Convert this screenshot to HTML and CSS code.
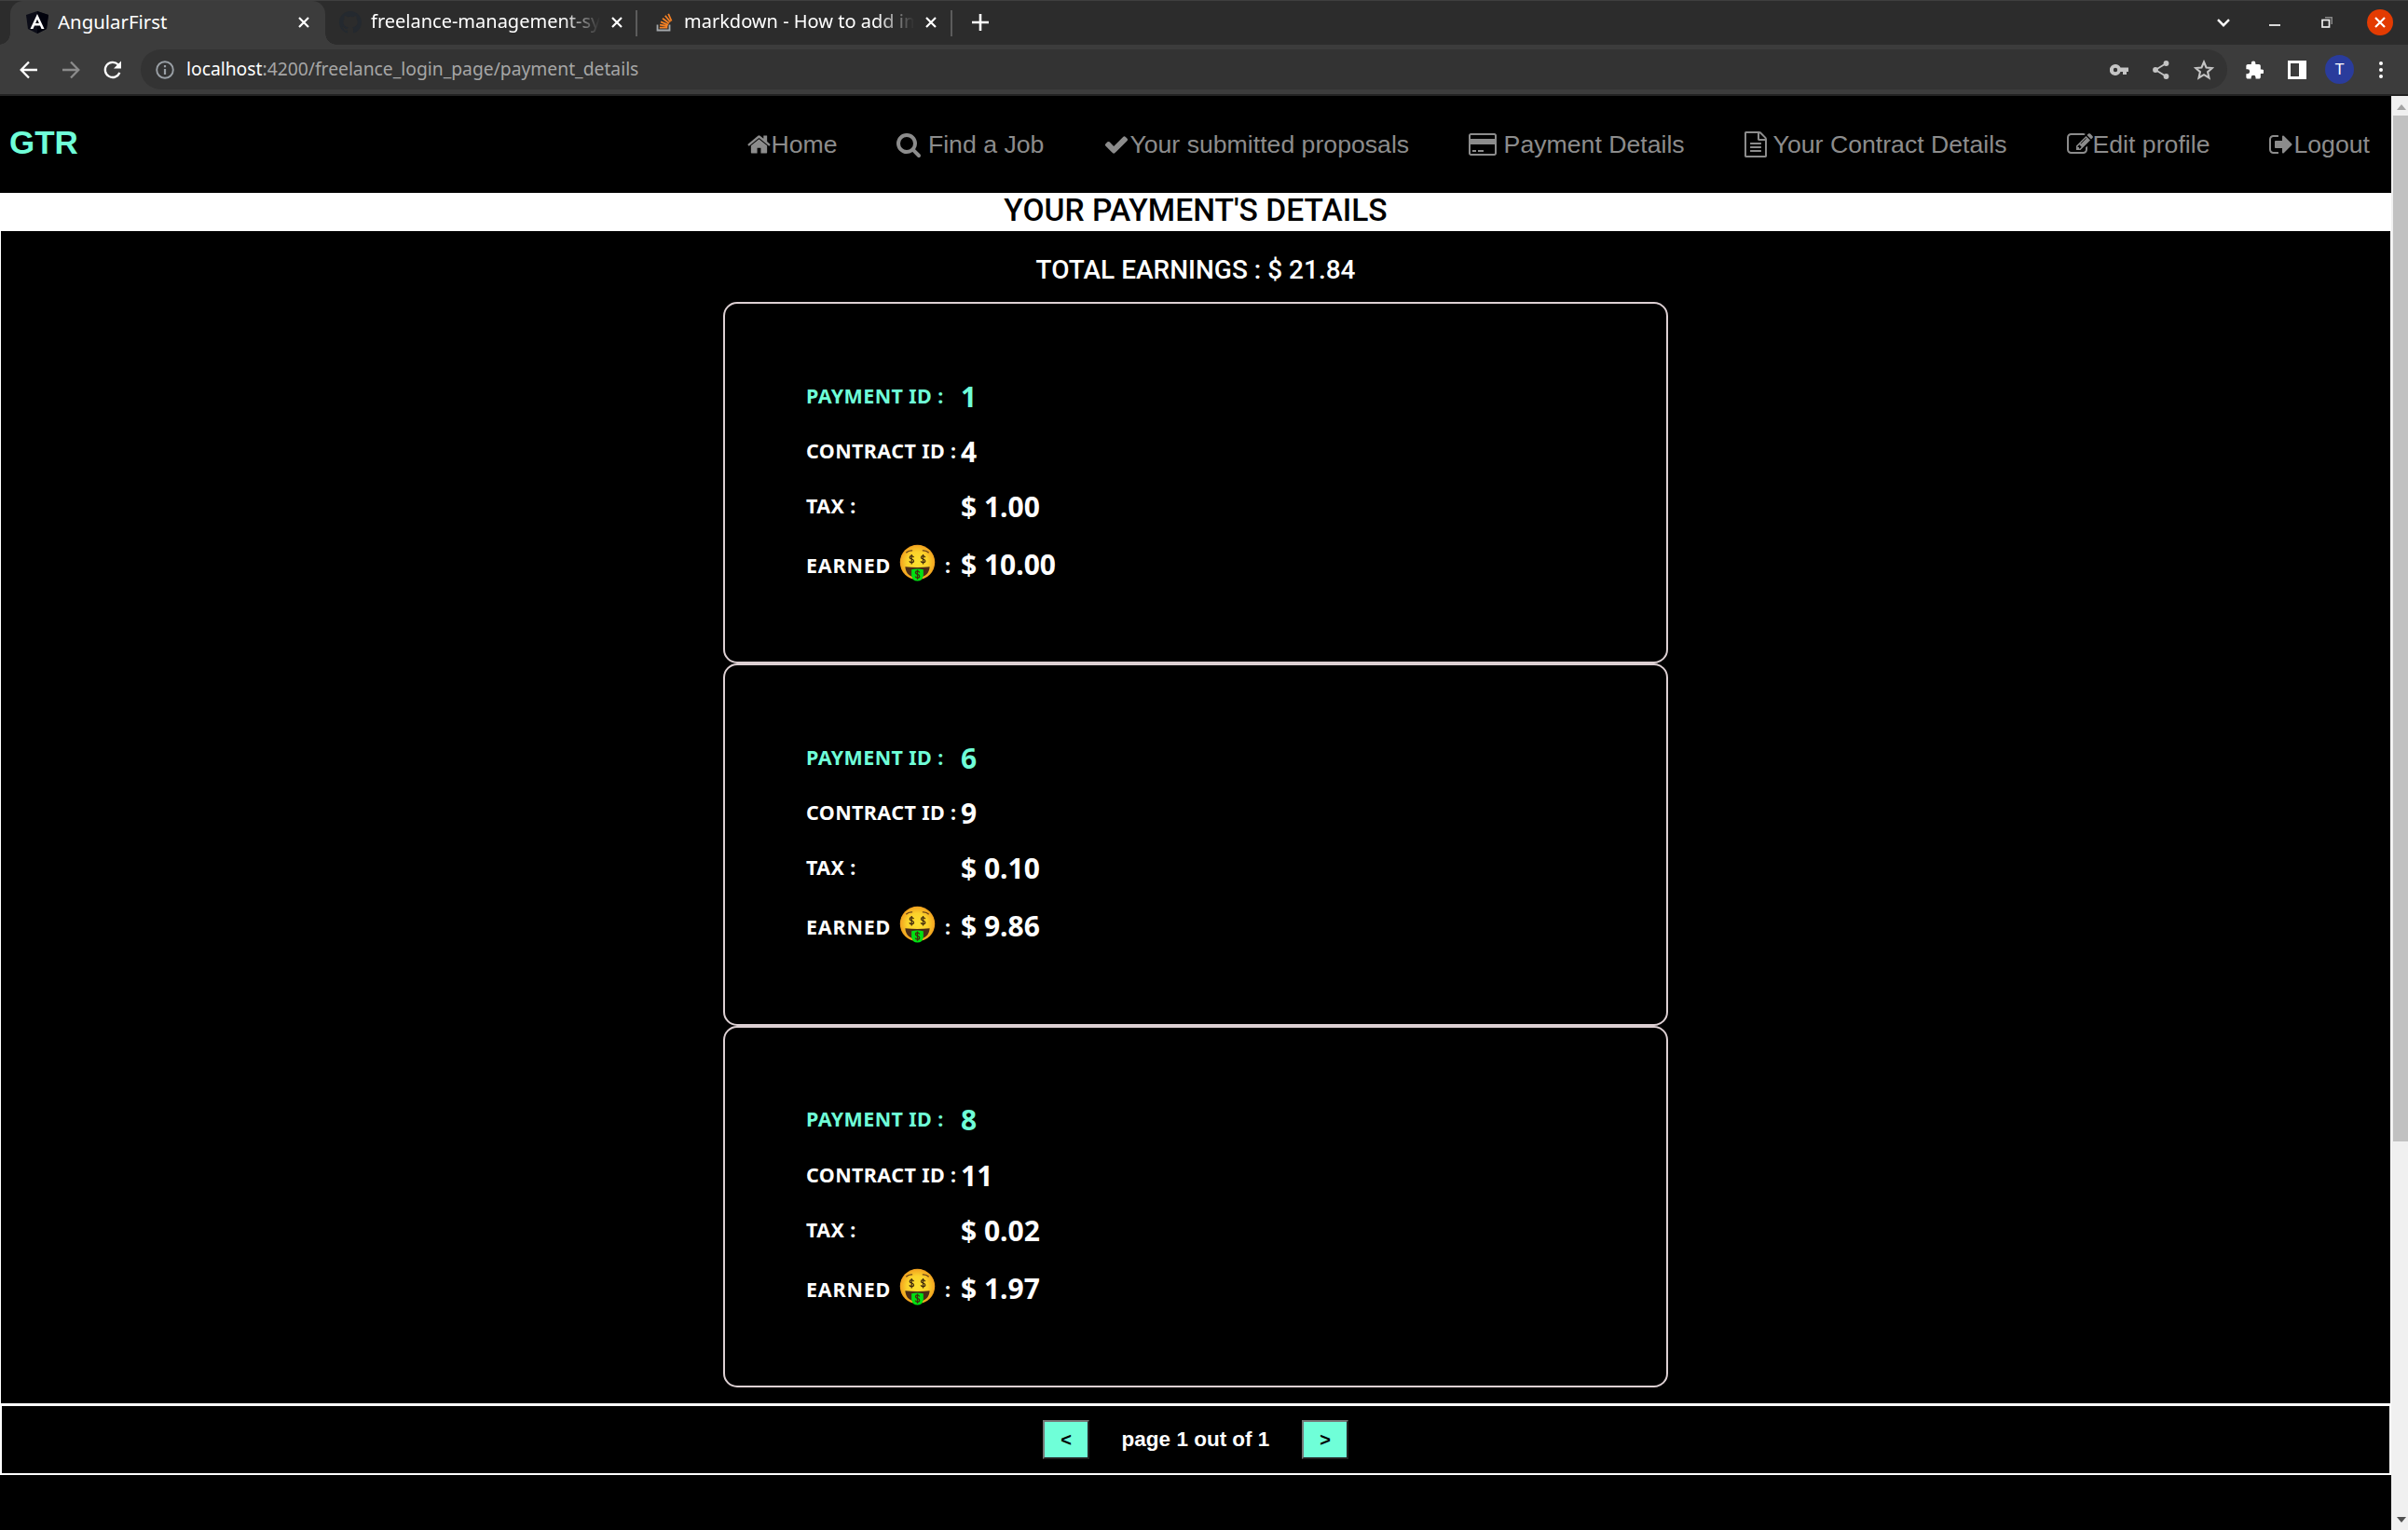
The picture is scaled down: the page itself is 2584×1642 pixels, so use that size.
FILE: index.html
```html
<!DOCTYPE html>
<html lang="en">
<head>
<meta charset="utf-8">
<title>AngularFirst</title>
<link rel="stylesheet" href="styles.css">
</head>
<body>
<svg class="defs" width="0" height="0">
  <defs>
    <radialGradient id="face" cx=".5" cy=".5" r=".5"><stop offset="0" stop-color="#fde030"/><stop offset=".6" stop-color="#fbd22b"/><stop offset="1" stop-color="#f2a11f"/></radialGradient>
    <symbol id="close" viewBox="0 0 12 12"><path d="M1 1L11 11M11 1L1 11" stroke="#fff" stroke-width="2.2"/></symbol>
    <symbol id="money" viewBox="0 0 40 40">
      <circle cx="20" cy="19.5" r="19.2" fill="url(#face)"/>
      <path d="M7.500 9Q10.500 6 14.500 6.600M25.500 6.600Q29.500 6 32.500 9" fill="none" stroke="#6b4518" stroke-width="1.400"/>
      <path d="M6.500 24.300Q20 26 33.500 24.300Q32.500 36 20 36Q7.500 36 6.500 24.300Z" fill="#4a2b16"/>
      <path d="M13.500 27.500Q20 26 26.500 27.500V34Q25.500 40 20 40Q14.500 40 13.500 34Z" fill="#00e013"/>
      <g fill="none" stroke="#422b0d" stroke-width="1.300"><path id="dollar" d="M16 14Q15 12.400 13.500 12.400Q11.500 12.400 11.500 14Q11.500 15.400 13.600 15.900Q15.900 16.400 15.900 18Q15.900 19.800 13.600 19.800Q11.800 19.800 11.200 18.200M13.600 10.800V21.500"/><use href="#dollar" x="12.600"/><use href="#dollar" x="6.400" y="16.800"/></g>
    </symbol>
  </defs>
</svg>

<header class="browser">
  <div class="tabs">
    <div class="tab tab-active">
      <svg class="favicon angular" viewBox="0 0 24 24"><path d="M12 0L24 4L22 19L12 24L2 19L0 4Z" fill="#0c0d18"/><path d="M12 0L24 4L22 19L12 24Z" fill="#01020c"/><path d="M4.500 19L12 3L19.500 19H16.500L15 15.500H9L7.500 19ZM10.100 13H13.900L12 8.800Z" fill="#fff" fill-rule="evenodd"/></svg>
      <span class="tab-title t1">AngularFirst</span>
      <svg class="x"><use href="#close"/></svg>
    </div>
    <div class="tab tab-second">
      <svg class="favicon" viewBox="0 0 16 16"><path fill="#24292f" d="M8 0C3.580 0 0 3.580 0 8c0 3.540 2.290 6.530 5.470 7.590.4.070.55-.17.55-.38v-1.490c-2.010.37-2.530-.49-2.690-.94-.09-.23-.48-.94-.82-1.130-.28-.15-.68-.52-.01-.53.63-.01 1.080.58 1.230.82.72 1.210 1.870.87 2.330.66.070-.52.28-.87.51-1.070-1.780-.2-3.640-.89-3.640-3.950 0-.87.31-1.590.82-2.150-.08-.2-.36-1.020.08-2.120 0 0 .67-.21 2.200.82a7.600 7.600 0 0 1 4 0c1.530-1.040 2.200-.82 2.200-.82.44 1.100.16 1.920.08 2.120.51.56.82 1.270.82 2.150 0 3.070-1.870 3.750-3.650 3.950.29.25.54.73.54 1.480v2.200c0 .21.150.46.55.38A8 8 0 0 0 16 8c0-4.420-3.580-8-8-8z"/></svg>
      <span class="tab-title t2">freelance-management-sys</span>
      <svg class="x"><use href="#close"/></svg>
    </div>
    <div class="tab tab-third">
      <svg class="favicon so" viewBox="0 0 18 20"><path d="M1.500 12.500V18.500H14.500V12.500" fill="none" stroke="#a4a8ab" stroke-width="1.800"/><path d="M3.800 15.600H12.300M4 12.600L12.400 14M5 9.300L13 12.600M7 5.800L14 11M9.800 2.700L15.300 9.500M13.200.8L16.600 8.500" stroke="#f48024" stroke-width="1.800"/></svg>
      <span class="tab-title t3">markdown - How to add ima</span>
      <svg class="x"><use href="#close"/></svg>
    </div>
    <svg class="plus" viewBox="0 0 18 18"><path d="M9 0V18M0 9H18" stroke="#fff" stroke-width="2.600"/></svg>
    <div class="window-controls">
      <svg class="chev" viewBox="0 0 14 9"><path d="M1 1.200L7 7.200L13 1.200" fill="none" stroke="#fff" stroke-width="2.400"/></svg>
      <svg class="min" viewBox="0 0 12 8"><path d="M0 7H12" stroke="#eee" stroke-width="1.800"/></svg>
      <svg class="restore" viewBox="0 0 12 12"><path d="M4 .8H11.200V8" fill="none" stroke="#888" stroke-width="1.500"/><rect x="1" y="3.500" width="7.500" height="7.500" fill="none" stroke="#eee" stroke-width="1.700"/></svg>
      <span class="quit"><svg class="x"><use href="#close"/></svg></span>
    </div>
  </div>
  <div class="toolbar">
    <svg class="arrow" viewBox="0 0 20 20"><path d="M19 10H2M10 1.500L1.700 10L10 18.500" fill="none" stroke="#fff" stroke-width="2.300"/></svg>
    <svg class="arrow fwd" viewBox="0 0 20 20"><path d="M1 10H18M10 1.500L18.300 10L10 18.500" fill="none" stroke="#8b8b8b" stroke-width="2.300"/></svg>
    <svg class="arrow" viewBox="0 0 20 20"><path d="M17.400 13A8.100 8.100 0 1 1 15.700 4.200L17 5.500" fill="none" stroke="#fff" stroke-width="2.300"/><path d="M19 0.500V8.500H11Z" fill="#fff"/></svg>
    <div class="address">
      <svg class="info" viewBox="0 0 20 20"><circle cx="10" cy="10" r="8.800" fill="none" stroke="#9aa0a6" stroke-width="1.900"/><path d="M10 9V15M10 5V7.200" stroke="#9aa0a6" stroke-width="2.200"/></svg>
      <span class="url"><b>localhost</b>:4200/freelance_login_page/payment_details</span>
      <svg class="key" viewBox="0 0 20 12"><path fill="#c4c4c4" fill-rule="evenodd" d="M6 0A6 6 0 1 0 11.500 8H14V11H18V8H20V3.500H11.500A6 6 0 0 0 6 0ZM6 3.800A2.200 2.200 0 1 1 6 8.200A2.200 2.200 0 0 1 6 3.800Z"/></svg>
      <svg class="share" viewBox="0 0 18 20"><path d="M14.500 3L3 10L14.500 17" fill="none" stroke="#c4c4c4" stroke-width="1.800"/><g fill="#c4c4c4"><circle cx="14.500" cy="3" r="2.900"/><circle cx="3" cy="10" r="2.900"/><circle cx="14.500" cy="17" r="2.900"/></g></svg>
      <svg class="star" viewBox="0 0 20 20"><path d="M10 2.300L12.300 7.700L18.100 8.200L13.700 12L15 17.700L10 14.700L5 17.700L6.300 12L1.900 8.200L7.700 7.700Z" fill="none" stroke="#c4c4c4" stroke-width="1.900"/></svg>
    </div>
    <svg class="puzzle" viewBox="0 0 22 22"><path fill="#fff" d="M20 10.500h-1.500V6.500c0-1.100-.9-2-2-2h-4V3a2.500 2.500 0 0 0-5 0v1.500h-4c-1.100 0-2 .9-2 2v3.800H3a2.700 2.700 0 0 1 0 5.400H1.500V19.500c0 1.100.9 2 2 2h3.800V20a2.700 2.700 0 0 1 5.400 0v1.500h3.800c1.100 0 2-.9 2-2v-4H20a2.500 2.500 0 0 0 0-5z"/></svg>
    <svg class="panel" viewBox="0 0 20 20"><path d="M0 0H20V20H0ZM3 3V17H12V3Z" fill="#fff" fill-rule="evenodd"/></svg>
    <span class="avatar">T</span>
    <svg class="dots" viewBox="0 0 4 18"><g fill="#fff"><circle cx="2" cy="2" r="2"/><circle cx="2" cy="9" r="2"/><circle cx="2" cy="16" r="2"/></g></svg>
  </div>
</header>

<div class="viewport">
  <main class="page">
    <nav class="navbar">
      <span class="brand">GTR</span>
      <div class="links">
        <a><svg width="25" height="28" viewBox="0 0 1664 1792"><path d="M1408 992v480q0 26-19 45t-45 19h-384v-384h-256v384h-384q-26 0-45-19t-19-45v-480q0-1 .5-3t.5-3l575-474 575 474q1 2 1 6zm223-69l-62 74q-8 9-21 11h-3q-13 0-21-7l-692-577-692 577q-12 8-24 7-13-2-21-11l-62-74q-8-10-7-23.500t11-21.500l719-599q32-26 76-26t76 26l244 204v-195q0-14 9-23t23-9h192q14 0 23 9t9 23v408l219 182q10 8 11 21.500t-7 23.500z"/></svg>Home</a>
        <a><svg width="26" height="28" viewBox="0 0 1664 1792"><path d="M1152 832q0-185-131.500-316.500t-316.500-131.500-316.500 131.500-131.500 316.500 131.500 316.500 316.500 131.500 316.500-131.500 131.500-316.500zm512 832q0 52-38 90t-90 38q-54 0-90-38l-343-342q-179 124-399 124-143 0-273.500-55.500t-225-150-150-225-55.500-273.500 55.500-273.500 150-225 225-150 273.500-55.500 273.500 55.500 225 150 150 225 55.500 273.500q0 220-124 399l343 343q37 37 37 90z"/></svg> Find a Job</a>
        <a><svg width="28" height="28" viewBox="0 0 1792 1792"><path d="M1671 566q0 40-28 68l-724 724-136 136q-28 28-68 28t-68-28l-136-136-362-362q-28-28-28-68t28-68l136-136q28-28 68-28t68 28l294 295 656-657q28-28 68-28t68 28l136 136q28 28 28 68z"/></svg>Your submitted proposals</a>
        <a><svg width="30" height="28" viewBox="0 0 1920 1792"><path d="M1760 128q66 0 113 47t47 113v1216q0 66-47 113t-113 47h-1600q-66 0-113-47t-47-113v-1216q0-66 47-113t113-47h1600zm-1600 128q-13 0-22.500 9.500t-9.500 22.500v224h1664v-224q0-13-9.500-22.500t-22.500-9.500h-1600zm1600 1280q13 0 22.500-9.500t9.500-22.500v-608h-1664v608q0 13 9.500 22.500t22.500 9.500h1600zm-1504-128v-128h256v128h-256zm384 0v-128h384v128h-384z"/></svg> Payment Details</a>
        <a><svg width="24" height="28" viewBox="0 0 1536 1792"><path d="M1468 380q28 28 48 76t20 88v1152q0 40-28 68t-68 28h-1344q-40 0-68-28t-28-68v-1600q0-40 28-68t68-28h896q40 0 88 20t76 48zm-444-244v376h376q-10-29-22-41l-313-313q-12-12-41-22zm384 1528v-1024h-416q-40 0-68-28t-28-68v-416h-768v1536h1280zm-1024-864q0-14 9-23t23-9h704q14 0 23 9t9 23v64q0 14-9 23t-23 9h-704q-14 0-23-9t-9-23v-64zm736 224q14 0 23 9t9 23v64q0 14-9 23t-23 9h-704q-14 0-23-9t-9-23v-64q0-14 9-23t23-9h704zm0 256q14 0 23 9t9 23v64q0 14-9 23t-23 9h-704q-14 0-23-9t-9-23v-64q0-14 9-23t23-9h704z"/></svg> Your Contract Details</a>
        <a><svg width="28" height="28" viewBox="0 0 1792 1792"><path d="M888 1184l116-116-152-152-116 116v56h96v96h56zm440-720q-16-16-33 1l-350 350q-17 17-1 33t33-1l350-350q17-17 1-33zm80 594v190q0 119-84.500 203.500t-203.500 84.500h-832q-119 0-203.500-84.500t-84.500-203.500v-832q0-119 84.500-203.500t203.500-84.500h832q63 0 117 25 15 7 18 23 3 17-9 29l-49 49q-14 14-32 8-23-6-45-6h-832q-66 0-113 47t-47 113v832q0 66 47 113t113 47h832q66 0 113-47t47-113v-126q0-13 9-22l64-64q15-15 35-7t20 29zm-96-738l288 288-672 672h-288v-288zm444 132l-92 92-288-288 92-92q28-28 68-28t68 28l152 152q28 28 28 68t-28 68z"/></svg>Edit profile</a>
        <a><svg width="26" height="28" viewBox="0 0 1664 1792"><path d="M640 1440q0 4 1 20t.5 26.500-3 23.500-10 19.500-20.500 6.500h-320q-119 0-203.500-84.500t-84.500-203.500v-704q0-119 84.500-203.500t203.500-84.500h320q13 0 22.500 9.500t9.500 22.500q0 4 1 20t.5 26.500-3 23.500-10 19.500-20.500 6.500h-320q-66 0-113 47t-47 113v704q0 66 47 113t113 47h312l11.500 1 11.500 3 8 5.500 7 9 2 13.500zm928-544q0 26-19 45l-544 544q-19 19-45 19t-45-19-19-45v-288h-448q-26 0-45-19t-19-45v-384q0-26 19-45t45-19h448v-288q0-26 19-45t45-19 45 19l544 544q19 19 19 45z"/></svg>Logout</a>
      </div>
    </nav>
    <h1 class="title">YOUR PAYMENT'S DETAILS</h1>
    <section class="payments">
      <h2 class="total">TOTAL EARNINGS : $ 21.84</h2>
      <article class="card">
        <div class="row accent"><span class="label">PAYMENT ID :</span><span class="value">1</span></div>
        <div class="row"><span class="label">CONTRACT ID :</span><span class="value">4</span></div>
        <div class="row"><span class="label">TAX :</span><span class="value">$ 1.00</span></div>
        <div class="row earned"><span class="label"><span class="word">EARNED</span><svg class="emoji"><use href="#money"/></svg>:</span><span class="value">$ 10.00</span></div>
      </article>
      <article class="card">
        <div class="row accent"><span class="label">PAYMENT ID :</span><span class="value">6</span></div>
        <div class="row"><span class="label">CONTRACT ID :</span><span class="value">9</span></div>
        <div class="row"><span class="label">TAX :</span><span class="value">$ 0.10</span></div>
        <div class="row earned"><span class="label"><span class="word">EARNED</span><svg class="emoji"><use href="#money"/></svg>:</span><span class="value">$ 9.86</span></div>
      </article>
      <article class="card">
        <div class="row accent"><span class="label">PAYMENT ID :</span><span class="value">8</span></div>
        <div class="row"><span class="label">CONTRACT ID :</span><span class="value">11</span></div>
        <div class="row"><span class="label">TAX :</span><span class="value">$ 0.02</span></div>
        <div class="row earned"><span class="label"><span class="word">EARNED</span><svg class="emoji"><use href="#money"/></svg>:</span><span class="value">$ 1.97</span></div>
      </article>
    </section>
    <footer class="pager">
      <button class="step">&lt;</button>
      <span class="count">page 1 out of 1</span>
      <button class="step">&gt;</button>
    </footer>
  </main>
  <aside class="scrollbar">
    <svg class="up" viewBox="0 0 10 6"><path d="M5 0L10 6H0Z" fill="#a3a3a3"/></svg>
    <div class="thumb"></div>
    <svg class="down" viewBox="0 0 10 6"><path d="M0 0H10L5 6Z" fill="#505050"/></svg>
  </aside>
</div>
</body>
</html>
```
FILE: styles.css
```css
* { box-sizing: border-box; }
body { margin: 0; width: 2584px; height: 1642px; overflow: hidden; background: #000; font-family: "Liberation Sans", Arial, sans-serif; }
svg { display: block; flex: none; }
.defs { position: absolute; }

/* browser chrome */
.browser { height: 103px; background: #3c3c3c; border-bottom: 2px solid #222; font-family: "Noto Sans", sans-serif; color: #fff; }
.tabs { height: 48px; background: #2c2c2c; border-top: 1px solid #3f3f3f; display: flex; align-items: center; padding-left: 11px; }
.tab { height: 47px; display: flex; align-items: center; font-size: 20px; padding-bottom: 1px; }
.tab-active { position: relative; width: 338px; background: #3c3c3c; border-radius: 14px 14px 0 0; padding-left: 17px; padding-right: 17px; }
.tab-active::before, .tab-active::after { content: ""; position: absolute; bottom: 0; width: 12px; height: 12px; }
.tab-active::before { left: -12px; background: radial-gradient(circle at 0 0, #2c2c2c 11.5px, #3c3c3c 12px); }
.tab-active::after { right: -12px; background: radial-gradient(circle at 100% 0, #2c2c2c 11.5px, #3c3c3c 12px); }
.tab-second { width: 335px; padding-left: 15px; padding-right: 16px; }
.tab-third { width: 338px; padding-left: 20px; padding-right: 17px; }
.tab-second, .tab-third { background: linear-gradient(#5c5c5c, #5c5c5c) right center / 2px 28px no-repeat; }
.favicon { width: 24px; height: 24px; }
.so { width: 18px; height: 20px; }
.tab-title { margin-left: 10px; overflow: hidden; white-space: nowrap; flex: 1; line-height: 28px; padding-bottom: 2px; }
.t1 { font-size: 20.400px; }
.t2, .t3 { margin-right: 12px; -webkit-mask-image: linear-gradient(90deg, #000 calc(100% - 40px), transparent); mask-image: linear-gradient(90deg, #000 calc(100% - 40px), transparent); }
.t3 { margin-left: 12px; }
.x { width: 12px; height: 12px; }
.plus { width: 18px; height: 18px; margin-left: 21px; margin-bottom: 1px; }
.window-controls { margin-left: auto; display: flex; align-items: center; padding: 0 16px 1px 0; }
.chev { width: 14px; height: 9px; margin-right: 42px; }
.min { width: 12px; height: 8px; margin-right: 44px; }
.restore { width: 12px; height: 12px; margin-right: 37px; }
.quit { width: 28px; height: 28px; border-radius: 50%; background: #e33b02; display: grid; place-items: center; }
.toolbar { height: 53px; display: flex; align-items: center; padding: 0 27px 0 21px; }
.arrow { width: 20px; height: 20px; margin-right: 25px; }
.address { height: 43px; width: 2239px; margin-left: -5px; border-radius: 22px; background: #333; display: flex; align-items: center; padding: 0 14px 0 16px; }
.info { width: 20px; height: 20px; }
.url { margin-left: 13px; margin-right: auto; font-size: 19.300px; line-height: 26px; padding-bottom: 2px; color: #a6a6a6; }
.url b { color: #fff; font-weight: 400; }
.key { width: 20px; height: 12px; margin-right: 26px; }
.share { width: 18px; height: 20px; margin-right: 26px; }
.star { width: 22px; height: 22px; }
.puzzle { width: 20px; height: 20px; margin-left: 19px; }
.panel { width: 20px; height: 20px; margin-left: 26px; }
.avatar { width: 31px; height: 31px; margin-left: 20px; border-radius: 50%; background: #2a3c9c; font: 17px/31px Roboto, sans-serif; text-align: center; }
.dots { width: 4px; height: 18px; margin-left: auto; }

/* page */
.viewport { height: 1539px; display: flex; }
.page { width: 2566px; background: #000; }
.navbar { height: 104px; padding: 0 23px 0 10px; display: flex; align-items: center; justify-content: space-between; }
.brand { color: #6fffd8; font-weight: 700; font-size: 35px; line-height: 40px; padding-bottom: 4px; }
.links { display: flex; color: #8c8c8c; fill: #8c8c8c; font-size: 26.670px; line-height: 30px; }
.links a { white-space: pre; display: flex; align-items: center; margin-left: 64px; }
.title { margin: 0; height: 41px; background: #fff; color: #000; text-align: center; font: 500 33.600px/37px Roboto, sans-serif; }
.payments { height: 1259px; border: 1px solid #fff; border-top: 0; display: flex; flex-direction: column; align-items: center; }
.total { margin: 0; height: 76px; color: #fff; font: 500 28px/83px Roboto, sans-serif; }
.card { width: 1014px; height: 388.400px; border: 2px solid #ddd0d3; border-radius: 15px; padding: 70px 87px; color: #fff; font-family: "Noto Sans", sans-serif; font-weight: 700; }
.row { display: flex; height: 59.200px; align-items: center; }
.accent { color: #6fffd8; }
.label { width: 166px; font-size: 21.500px; letter-spacing: .4px; white-space: nowrap; line-height: 30px; padding-bottom: 2px; }
.value { font-size: 30px; line-height: 40px; }
.earned { height: 65px; }
.earned .label { display: flex; align-items: center; padding: 2px 0 0; }
.word { letter-spacing: .8px; }
.emoji { width: 39px; height: 40px; margin: -6px 10px 0 9px; }
.pager { height: 76px; border: 2px solid #fff; display: flex; align-items: center; justify-content: center; color: #fff; font-weight: 700; font-size: 22.500px; }
.step { width: 50px; height: 42px; padding: 0; border: 2px solid; border-color: #767676 #212121 #212121 #767676; background: #6fffd8; color: #000; font: 700 20px/36px "Liberation Sans", Arial, sans-serif; }
.count { width: 228px; text-align: center; }
.scrollbar { width: 18px; background: #f0f0f0; padding: 9px 0 8px 2px; display: flex; flex-direction: column; }
.up, .down { width: 10px; height: 6px; margin-left: 4px; }
.thumb { height: 1101px; margin-top: 6px; background: #c1c1c1; }
.down { margin-top: auto; }
```
